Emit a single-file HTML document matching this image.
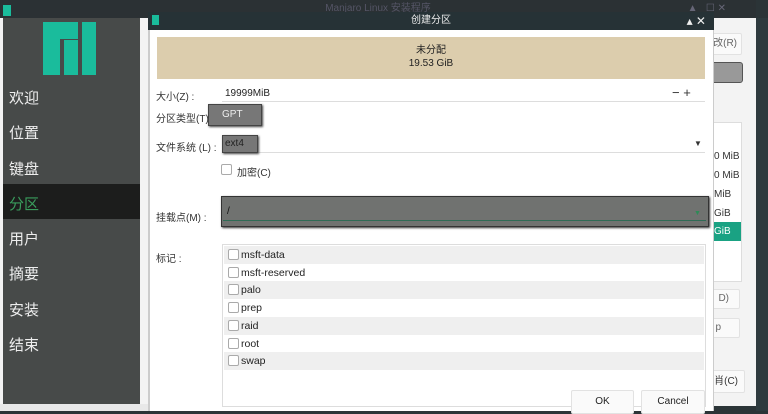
<!DOCTYPE html><html><head><meta charset="utf-8"><style>
*{margin:0;padding:0;box-sizing:border-box}
body{width:768px;height:411px;overflow:hidden;background:#2b3437;font-family:"Liberation Sans","Noto Sans CJK SC",sans-serif;position:relative;font-size:10px;color:#333}
.a{position:absolute}
.side{left:3px;top:18px;width:137px;height:386px;background:#474a49}
.side div{position:absolute;left:6px;font-size:15px;color:#eee}
.cb{position:absolute;width:11px;height:11px;border:1px solid #aaa;border-radius:2px;background:#fff}
.row{position:absolute;left:1px;right:1px;height:18px}
.row span{position:absolute;left:17px;top:0;line-height:18px;font-size:10.5px;color:#222}
.row .cb{left:4px;top:3px}
.btn{position:absolute;background:#fafafa;border:1px solid #e2e2e2;border-radius:2px;font-size:10px;text-align:center}
</style></head><body>
<div class="a" style="left:0;top:0;width:756px;height:18px;background:#2b3134;color:#556;font-size:10px;text-align:center;line-height:18px">Manjaro Linux 安装程序<span style="position:absolute;right:30px;color:#667">▲ &nbsp; ☐ ✕</span></div>
<div class="a" style="left:3px;top:5px;width:8px;height:11px;background:#1abc9c"></div>
<div class="a" style="left:0;top:18px;width:756px;height:388px;background:#f3f3f3"></div>
<div class="a" style="left:756px;top:18px;width:12px;height:393px;background:#2e3a3e"></div>
<div class="a side">
<div style="left:40px;top:4px;width:17px;height:53px;background:#1abc9c"></div>
<div style="left:40px;top:4px;width:35px;height:17px;background:#1abc9c"></div>
<div style="left:61px;top:22px;width:14px;height:35px;background:#1abc9c"></div>
<div style="left:79px;top:4px;width:14px;height:53px;background:#1abc9c"></div>
<div style="top:69px">欢迎</div><div style="top:104px">位置</div><div style="top:140px">键盘</div>
<div style="left:0;top:166px;width:137px;height:35px;background:#1c1d1c"></div>
<div style="top:175px;color:#3a9d5d">分区</div>
<div style="top:210px">用户</div><div style="top:245px">摘要</div><div style="top:281px">安装</div><div style="top:316px">结束</div>
</div>
<div class="btn" style="left:705px;top:33px;width:37px;height:22px;line-height:20px;text-align:right;padding-right:4px;color:#666">改(R)</div>
<div class="a" style="left:705px;top:62px;width:38px;height:21px;background:#999;border:1px solid #555;border-radius:3px"></div>
<div class="a" style="left:705px;top:122px;width:37px;height:160px;background:#fff;border:1px solid #ddd"></div>
<div class="a" style="left:714px;top:147px;font-size:10px;line-height:19px;color:#333">0 MiB<br>0 MiB<br>MiB<br>GiB</div>
<div class="a" style="left:714px;top:222px;width:27px;height:19px;background:#1aa283;color:#fff;font-size:10px;line-height:19px">GiB</div>
<div class="btn" style="left:705px;top:289px;width:35px;height:20px;line-height:18px;text-align:right;padding-right:10px;color:#666">D)</div>
<div class="btn" style="left:705px;top:318px;width:35px;height:20px;line-height:18px;text-align:right;padding-right:18px;color:#666">p</div>
<div class="btn" style="left:705px;top:370px;width:40px;height:23px;line-height:21px;text-align:right;padding-right:6px;color:#333">肖(C)</div>
<div class="a" style="left:148px;top:12px;width:566px;height:18px;background:#263236;color:#eee;font-size:10px;text-align:center;line-height:18px">创建分区<span style="position:absolute;right:8px;font-size:12px">▴ ✕</span></div>
<div class="a" style="left:152px;top:15px;width:7px;height:10px;background:#1abc9c"></div>
<div class="a" style="left:148px;top:30px;width:566px;height:381px;background:#fff;border-left:2px solid #ccc;border-right:1px solid #ccc"></div>
<div class="a" style="left:157px;top:37px;width:548px;height:42px;background:#dccdad;text-align:center;font-size:10px;line-height:13px;padding-top:7px;color:#222">未分配<br>19.53 GiB</div>
<div class="a" style="left:156px;top:88px">大小(Z) :</div>
<div class="a" style="left:225px;top:88px;color:#222">19999MiB</div>
<div class="a" style="left:672px;top:85px;font-size:13px;color:#333">− +</div>
<div class="a" style="left:222px;top:101px;width:483px;height:1px;background:#ddd"></div>
<div class="a" style="left:156px;top:110px">分区类型(T) :</div>
<div class="a" style="left:208px;top:104px;width:54px;height:22px;background:#777;border:1px solid #444;box-shadow:1px 1px 2px #444;color:#eee;line-height:20px;padding-left:13px">GPT</div>
<div class="a" style="left:156px;top:139px">文件系统 (L) :</div>
<div class="a" style="left:222px;top:135px;width:483px;height:18px;border-bottom:1px solid #ddd"></div>
<div class="a" style="left:222px;top:135px;width:36px;height:18px;background:#777;border:1px solid #444;box-shadow:1px 1px 2px #444;color:#222;line-height:16px;padding-left:2px">ext4</div>
<div class="a" style="left:694px;top:139px;font-size:8px">▼</div>
<div class="cb" style="left:221px;top:164px"></div>
<div class="a" style="left:237px;top:164px">加密(C)</div>
<div class="a" style="left:156px;top:209px">挂载点(M) :</div>
<div class="a" style="left:221px;top:196px;width:488px;height:31px;background:#707270;border:1px solid #333;box-shadow:1px 1px 2px #333"></div>
<div class="a" style="left:223px;top:220px;width:483px;height:1px;background:#2e6b55"></div>
<div class="a" style="left:227px;top:206px;color:#111">/</div>
<div class="a" style="left:694px;top:210px;font-size:7px;color:#2e8b57">▼</div>
<div class="a" style="left:156px;top:250px">标记 :</div>
<div class="a" style="left:222px;top:244px;width:484px;height:163px;border:1px solid #ddd;background:#fff">
<div class="row" style="top:1px;background:#efefef"><div class="cb"></div><span>msft-data</span></div>
<div class="row" style="top:19px"><div class="cb"></div><span>msft-reserved</span></div>
<div class="row" style="top:36px;background:#efefef"><div class="cb"></div><span>palo</span></div>
<div class="row" style="top:54px"><div class="cb"></div><span>prep</span></div>
<div class="row" style="top:72px;background:#efefef"><div class="cb"></div><span>raid</span></div>
<div class="row" style="top:90px"><div class="cb"></div><span>root</span></div>
<div class="row" style="top:107px;background:#efefef"><div class="cb"></div><span>swap</span></div>
</div>
<div class="btn" style="left:571px;top:390px;width:63px;height:24px;line-height:22px;color:#222">OK</div>
<div class="btn" style="left:641px;top:390px;width:64px;height:24px;line-height:22px;color:#222">Cancel</div>
<div class="a" style="left:0;top:404px;width:148px;height:7px;background:#e8e8e8"></div>
</body></html>
